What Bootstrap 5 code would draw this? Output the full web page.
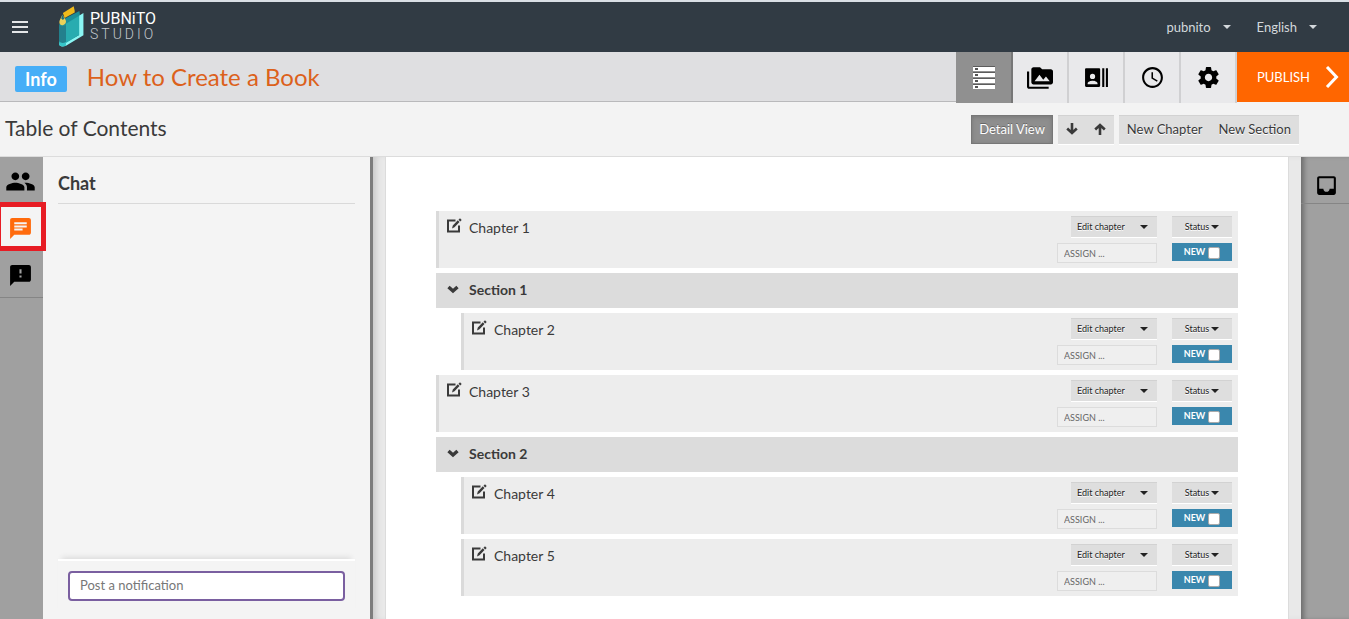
<!DOCTYPE html>
<html lang="en">
<head>
<meta charset="utf-8">
<meta name="viewport" content="width=device-width, initial-scale=1">
<title>Pubnito Studio</title>
<link href="https://cdn.jsdelivr.net/npm/bootstrap@5.3.0/dist/css/bootstrap.min.css" rel="stylesheet">
<style>
body { font-family: Lato, sans-serif; font-size: 13px; line-height: 20px; color: #3a3a3a; background: #f3f3f3; }
button { color: inherit; font: inherit; border: 0; padding: 0; }
svg { display: block; flex: none; }
.app-nav { --bs-navbar-padding-y: 0; background: #313b44; border-top: 2px solid #d9dfe5; height: 52px; }
.app-nav .nav-drop { background: none; color: #d3d8dc; gap: 12px; }
.nav-menus { gap: 26px; padding-right: 32px; }
.caret { width: 0; height: 0; border: 4px solid transparent; border-top-color: currentColor; border-bottom: 0; }
.menu-btn { margin-right: 31px; }
.brand { font-family: Roboto, sans-serif; color: #fff; text-decoration: none; gap: 6px; padding-bottom: 2px; }
.brand-name { font-size: 16px; line-height: 16px; }
.brand-sub { font-size: 14px; line-height: 14px; font-weight: 300; letter-spacing: 3px; color: #c3c8cc; }
.title-bar { background: #dfdfe1; border-bottom: 1px solid #b9b9bb; height: 50px; }
.title-group { padding-left: 15px; gap: 20px; }
.info-tag { background: #46aef7; font-size: 18px; line-height: 26px; font-weight: 700; color: #fff; padding: 0 10px; border-radius: 2px; }
.book-title { font-size: 24px; line-height: 30px; color: #dc611b; }
.tool-tab { width: 56px; height: 51px; background: #e9e9eb; color: #000; border-right: 2px solid #d0d0d2; }
.tool-tab.active { width: 57px; background: #909090; color: #fff; border-color: #777; }
.publish { width: 112px; height: 50px; background: #ff6600; color: #fff; gap: 15px; padding-left: 10px; }
.sub-bar { height: 55px; border-bottom: 1px solid #dcdcdc; padding: 0 50px 0 5px; }
.sub-tools { gap: 5px; }
.sub-title { font-size: 21px; line-height: 28px; padding-bottom: 2px; }
.tool-btn { height: 29px; padding: 0 8px 1px; background: #dedede; border-top: 1px solid #d2d2d2; text-shadow: 0 1px 0 #fff; }
.tool-set { box-shadow: 0 1px 0 #fff; }
.tool-btn.active { background: #8e8e8e; color: #fff; border: 1px solid #777; padding: 0 7px; box-shadow: inset 0 1px 4px #777; text-shadow: 0 -1px 0 #666; }
.rail { background: #a0a0a0; color: #000; flex: none; }
.rail-left { width: 43px; }
.rail-left .rail-btn { padding: 3px 2px 0 0; }
.rail-right { width: 48px; box-shadow: inset 5px 0 5px -2px #6c6c6c; }
.rail-right .rail-btn { padding: 10px 0 0 2px; }
.rail-btn { height: 47px; background: none; border-bottom: 1px solid #858585; }
.rail-btn.active { background: #f4f4f4; color: #ff6a0c; }
.rail-mark { position: absolute; inset: -2px -3px -1px -4px; border: 5px solid #e71c24; pointer-events: none; }
.chat { width: 330px; flex: none; background: #f4f4f4; border-right: 3px solid #7d7d7d; padding: 0 15px; }
.chat-title { font-size: 18px; line-height: 24px; font-weight: 700; padding: 14px 0 8px; border-bottom: 1px solid #d9d9d9; }
.chat-form { border-top: 2px solid #fff; padding: 10px 10px 18px; box-shadow: 0 -6px 5px -4px #ddd; }
.chat-form .form-control { height: 30px; border: 2px solid #7a5fa0; border-radius: 4px; font-size: 13px; line-height: 20px; padding: 2px 10px 4px; }
.chat-form .form-control::placeholder { color: #777; }
.gutter { background: #e9e9e9; padding: 0 13px; }
.gutter-edge { box-shadow: inset 6px 0 6px -3px #c8c8c8; }
.paper { background: #fff; box-shadow: 0 0 0 1px #dcdcdc; padding: 54px 50px 0; }
.toc { gap: 5px; font-size: 14px; }
.toc-chapter { height: 57px; background: #ededed; border-left: 3px solid #dadada; padding: 5px 6px 0 8px; }
.toc-section { height: 35px; background: #dcdcdc; font-weight: 700; padding: 0 11px 2px; gap: 10px; }
.toc-nested { padding-left: 25px; gap: 5px; }
.toc-name { gap: 7px; line-height: 24px; }
.toc-name svg { margin-top: 2px; }
.fold { background: none; padding-bottom: 1px; }
.row-tools { gap: 15px; font-size: 9px; line-height: 12px; color: #222; }
.pair { gap: 5px; }
.mini { height: 22px; background: #dedede; border-top: 1px solid #d2d2d2; border-bottom: 1px solid #fff; text-shadow: 0 1px 0 #fff; }
.mini-edit { width: 86px; padding: 0 9px 0 6px; }
.mini-status { width: 60px; gap: 2px; }
.assign { width: 100px; height: 20px; border: 1px solid #dcdcdc; background: #efefef; padding: 0 6px; font-size: 9px; line-height: 12px; }
.assign::placeholder { color: #666; }
.state { width: 60px; height: 18px; background: #3a87ad; color: #fff; font-weight: 700; gap: 3px; }
.state input { appearance: none; width: 12px; height: 12px; margin: 1px 0 0; background: #fff; border: 1px solid #aaa; border-radius: 2px; }
</style>
</head>
<body class="min-vh-100 d-flex flex-column overflow-hidden">

<svg class="d-none" aria-hidden="true">
  <symbol id="i-edit" viewBox="0 0 15 15"><path d="M8.500 2.500H1v11h11V7.500" fill="none" stroke="currentColor" stroke-width="2"/><path d="M5 10.500l.8-3 5-5.200 1.700 1.700-5 5.300zM11.500 1.700L13 .2l1.700 1.700-1.500 1.500z" fill="currentColor"/></symbol>
  <symbol id="i-fold" viewBox="0 0 12 9"><path d="M1.500 2L6 6l4.500-4" fill="none" stroke="currentColor" stroke-width="3.400"/></symbol>
</svg>

<nav class="navbar app-nav flex-nowrap justify-content-between">
  <div class="d-flex align-items-center ps-2">
    <button class="menu-btn bg-transparent ms-1" aria-label="Menu">
      <svg width="16" height="14" viewBox="0 0 16 14" stroke="#e4e6e8" stroke-width="2"><path d="M0 2h16M0 7h16M0 12h16"/></svg>
    </button>
    <a href="#" class="brand d-flex align-items-center">
      <svg width="25" height="41" viewBox="27 17 73 122">
        <path d="M27 72l10-14 50-26 2 14-40 26v62l-22 2z" fill="#1c8f98"/>
        <path d="M86 46l13-8v66l-52 31c-14 5-20 1-20-8l20-2 39-22z" fill="#8af6f4"/>
        <path d="M47 70l39-24v57l-39 24z" fill="#28acb0"/>
        <path d="M27 74c5 5 13 4 20 0v52c-4 6-13 6-20 2z" fill="#23808d"/>
        <path d="M27 122c4 6 13 6 20 2v11c-12 5-20 2-20-8z" fill="#36c4c8"/>
        <path d="M38 38l32-20 3 13v5L43 53z" fill="#f0bb1b"/>
        <path d="M36 43l8 12c6 8 3 16-6 19-9 1-12-5-10-13z" fill="#e8d15a"/>
        <path d="M36 42l-3 12 5 5 4-5z" fill="#1f6f7c"/>
      </svg>
      <span class="d-flex flex-column">
        <span class="brand-name">PUBNiTO</span>
        <span class="brand-sub">STUDIO</span>
      </span>
    </a>
  </div>
  <div class="nav-menus d-flex align-items-center">
    <button class="nav-drop d-flex align-items-center">pubnito <span class="caret"></span></button>
    <button class="nav-drop d-flex align-items-center">English <span class="caret"></span></button>
  </div>
</nav>

<header class="title-bar d-flex justify-content-between">
  <div class="title-group d-flex align-items-center pt-1">
    <a href="#" class="info-tag text-decoration-none">Info</a>
    <h1 class="book-title fw-normal mb-1">How to Create a Book</h1>
  </div>
  <div class="d-flex">
    <button class="tool-tab active d-flex align-items-center justify-content-center" aria-label="Contents">
      <svg width="22" height="24" viewBox="0 0 22 24"><path d="M0 1h22v4H0zM0 7h22v4H0zM0 13h22v4H0zM0 19h22v4H0z" fill="#fff"/><path d="M0 .5h22M0 6.500h22M0 12.500h22M0 18.500h22" stroke="#5c5c5c"/><path d="M2 2h3v2H2zM2 8h3v2H2zM2 14h3v2H2zM2 20h3v2H2z" fill="#555"/></svg>
    </button>
    <button class="tool-tab d-flex align-items-center justify-content-center" aria-label="Media">
      <svg width="26" height="26" viewBox="0 0 24 24" fill="currentColor"><path d="M2 6H0v5h.01L0 20c0 1.100.9 2 2 2h18v-2H2V6zm20-2h-8l-2-2H6c-1.100 0-1.990.9-1.990 2L4 16c0 1.100.9 2 2 2h16c1.100 0 2-.9 2-2V6c0-1.100-.9-2-2-2zM7 15l4.500-6 3.500 4.510 2.500-3.010L21 15H7z"/></svg>
    </button>
    <button class="tool-tab d-flex align-items-center justify-content-center" aria-label="Contributors">
      <svg width="25" height="25" viewBox="0 0 24 24" fill="currentColor"><path d="M21 3v18h2V3zM17.500 3v18h2V3zM14.500 3H2a1 1 0 0 0-1 1v16a1 1 0 0 0 1 1h12.500a1 1 0 0 0 1-1V4a1 1 0 0 0-1-1zM8.200 8.500a2.500 2.500 0 1 1 0 5 2.500 2.500 0 0 1 0-5zM13 18.500H3.500v-.8c0-1.700 3-2.500 4.700-2.500s4.800.8 4.800 2.500z"/></svg>
    </button>
    <button class="tool-tab d-flex align-items-center justify-content-center" aria-label="History">
      <svg width="25" height="25" viewBox="0 0 24 24" fill="currentColor"><path d="M11.990 2C6.470 2 2 6.480 2 12s4.470 10 9.990 10C17.520 22 22 17.520 22 12S17.520 2 11.990 2zM12 20c-4.420 0-8-3.580-8-8s3.580-8 8-8 8 3.580 8 8-3.580 8-8 8zm.5-13H11v6l5.250 3.150.75-1.230-4.500-2.670z"/></svg>
    </button>
    <button class="tool-tab d-flex align-items-center justify-content-center" aria-label="Settings">
      <svg width="25" height="25" viewBox="0 0 24 24" fill="currentColor"><path d="M19.430 12.980c.04-.32.070-.64.070-.98s-.03-.66-.07-.98l2.110-1.650c.19-.15.24-.42.12-.64l-2-3.460c-.12-.22-.39-.3-.61-.22l-2.490 1c-.52-.4-1.080-.73-1.690-.98l-.38-2.650C14.460 2.180 14.250 2 14 2h-4c-.25 0-.46.18-.49.42l-.38 2.650c-.61.25-1.170.59-1.690.98l-2.490-1c-.23-.09-.49 0-.61.220l-2 3.460c-.13.22-.07.49.12.64l2.110 1.650c-.04.32-.07.65-.07.98s.03.66.07.98l-2.110 1.650c-.19.15-.24.42-.12.64l2 3.460c.12.22.39.3.61.220l2.490-1c.52.4 1.080.73 1.690.98l.38 2.650c.03.24.24.42.49.42h4c.25 0 .46-.18.49-.42l.38-2.650c.61-.25 1.170-.59 1.690-.98l2.490 1c.23.09.49 0 .61-.22l2-3.460c.12-.22.07-.49-.12-.64l-2.110-1.650zM12 15.500c-1.930 0-3.500-1.570-3.500-3.500s1.570-3.500 3.500-3.500 3.500 1.570 3.500 3.500-1.570 3.500-3.500 3.500z"/></svg>
    </button>
    <button class="publish d-flex align-items-center justify-content-center">PUBLISH
      <svg width="14" height="22" viewBox="0 0 14 22" fill="none" stroke="#fff" stroke-width="3"><path d="M2 1l9.500 10L2 21"/></svg>
    </button>
  </div>
</header>

<div class="sub-bar d-flex align-items-center justify-content-between">
  <h2 class="sub-title fw-normal m-0">Table of Contents</h2>
  <div class="sub-tools d-flex">
    <button class="tool-btn active">Detail View</button>
    <div class="tool-set d-flex">
      <button class="tool-btn" aria-label="Move down"><svg width="12" height="12" viewBox="0 0 12 12" fill="none" stroke="currentColor" stroke-width="2.600"><path d="M6 0v10M1.200 5.500L6 10l4.800-4.500"/></svg></button>
      <button class="tool-btn" aria-label="Move up"><svg width="12" height="12" viewBox="0 0 12 12" fill="none" stroke="currentColor" stroke-width="2.600"><path d="M6 12V2M1.200 6.500L6 2l4.800 4.500"/></svg></button>
    </div>
    <div class="tool-set d-flex">
      <button class="tool-btn">New Chapter</button>
      <button class="tool-btn">New Section</button>
    </div>
  </div>
</div>

<div class="d-flex flex-grow-1">
  <div class="rail rail-left d-flex flex-column">
    <button class="rail-btn d-flex align-items-center justify-content-center" aria-label="People">
      <svg width="31" height="31" viewBox="0 0 24 24" fill="currentColor"><path d="M16 11c1.660 0 2.990-1.340 2.990-3S17.660 5 16 5c-1.660 0-3 1.340-3 3s1.340 3 3 3zm-8 0c1.660 0 2.990-1.340 2.990-3S9.660 5 8 5C6.340 5 5 6.340 5 8s1.340 3 3 3zm0 2c-2.330 0-7 1.170-7 3.500V19h14v-2.500c0-2.330-4.670-3.500-7-3.500zm8 0c-.29 0-.62.020-.97.050 1.160.84 1.970 1.970 1.970 3.450V19h6v-2.500c0-2.330-4.670-3.500-7-3.500z"/></svg>
    </button>
    <button class="rail-btn active position-relative d-flex align-items-center justify-content-center" aria-label="Chat">
      <svg width="25" height="25" viewBox="0 0 24 24" fill="currentColor"><path d="M20 2H4c-1.100 0-1.990.9-1.990 2L2 22l4-4h14c1.100 0 2-.9 2-2V4c0-1.100-.9-2-2-2zM6 9h12v2H6V9zm8 5H6v-2h8v2zm4-6H6V6h12v2z"/></svg>
      <span class="rail-mark"></span>
    </button>
    <button class="rail-btn d-flex align-items-center justify-content-center" aria-label="Feedback">
      <svg width="25" height="25" viewBox="0 0 24 24" fill="currentColor"><path d="M20 2H4c-1.100 0-1.990.9-1.990 2L2 22l4-4h14c1.100 0 2-.9 2-2V4c0-1.100-.9-2-2-2zm-7 12h-2v-2h2v2zm0-4h-2V6h2v4z"/></svg>
    </button>
  </div>

  <aside class="chat d-flex flex-column">
    <h3 class="chat-title m-0">Chat</h3>
    <form class="chat-form mt-auto">
      <input class="form-control" type="text" placeholder="Post a notification" aria-label="Post a notification">
    </form>
  </aside>

  <main class="gutter gutter-edge flex-grow-1 d-flex">
    <div class="paper flex-grow-1">
      <div id="toc" class="toc d-flex flex-column"></div>
    </div>
  </main>

  <div class="rail rail-right d-flex flex-column">
    <button class="rail-btn d-flex align-items-center justify-content-center" aria-label="Inbox">
      <svg width="25" height="25" viewBox="0 0 24 24" fill="currentColor"><path d="M19 3H4.990c-1.110 0-1.980.89-1.980 2L3 19c0 1.100.88 2 1.990 2H19c1.100 0 2-.9 2-2V5c0-1.110-.9-2-2-2zm0 12h-4c0 1.660-1.350 3-3 3s-3-1.340-3-3H4.990V5H19v10z"/></svg>
    </button>
  </div>
</div>

<script src="https://cdn.jsdelivr.net/npm/bootstrap@5.3.0/dist/js/bootstrap.bundle.min.js"></script>
<script>
const book = [
  { chapter: 'Chapter 1' },
  { section: 'Section 1', chapters: ['Chapter 2'] },
  { chapter: 'Chapter 3' },
  { section: 'Section 2', chapters: ['Chapter 4', 'Chapter 5'] }
];
const chapterRow = name => `
  <div class="toc-chapter d-flex justify-content-between align-items-start">
    <div class="toc-name d-flex align-items-start"><svg width="15" height="15"><use href="#i-edit"/></svg>${name}</div>
    <div class="row-tools d-flex">
      <div class="pair d-flex flex-column align-items-end">
        <button class="mini mini-edit d-flex align-items-center justify-content-between">Edit chapter <span class="caret"></span></button>
        <input class="assign" type="text" placeholder="ASSIGN ..." aria-label="Assign ${name}">
      </div>
      <div class="pair d-flex flex-column">
        <button class="mini mini-status d-flex align-items-center justify-content-center">Status <span class="caret"></span></button>
        <label class="state d-flex align-items-center justify-content-center">NEW <input type="checkbox"></label>
      </div>
    </div>
  </div>`;
document.getElementById('toc').innerHTML = book.map(item => item.chapter
  ? chapterRow(item.chapter)
  : `<div class="toc-section d-flex align-items-center"><button class="fold" aria-label="Collapse ${item.section}"><svg width="12" height="9"><use href="#i-fold"/></svg></button>${item.section}</div>
     <div class="toc-nested d-flex flex-column">${item.chapters.map(chapterRow).join('')}</div>`).join('');
</script>
</body>
</html>
